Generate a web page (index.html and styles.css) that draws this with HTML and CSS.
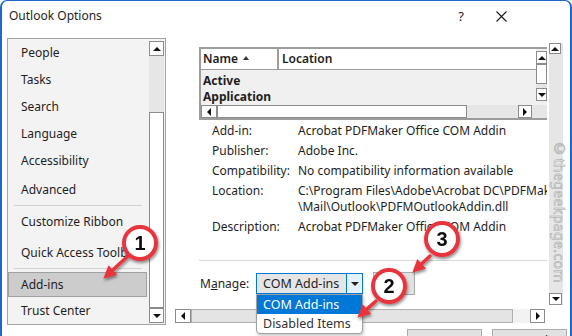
FILE: index.html
```html
<!DOCTYPE html>
<html lang="en">
<head>
    <meta charset="UTF-8">
    <title>Outlook Options</title>
    <link rel="stylesheet" href="styles.css">
</head>
<body>
    <div class="window">
        <header class="titlebar">
            <span class="title">Outlook Options</span>
            <span class="help">?</span>
            <svg class="close" width="11" height="11" viewBox="0 0 11 11">
                <path d="M0.5 0.5L10.5 10.5M10.5 0.5L0.5 10.5" stroke="#1a1a1a" stroke-width="1.1"/>
            </svg>
        </header>

        <div class="main">
            <nav class="nav">
                <ul class="nav-list">
                    <li class="nav-item">People</li>
                    <li class="nav-item">Tasks</li>
                    <li class="nav-item">Search</li>
                    <li class="nav-item">Language</li>
                    <li class="nav-item">Accessibility</li>
                    <li class="nav-item tall">Advanced</li>
                    <li class="nav-sep"></li>
                    <li class="nav-item tall">Customize Ribbon</li>
                    <li class="nav-item tall">Quick Access Toolbar</li>
                    <li class="nav-sep"></li>
                    <li class="nav-item selected">Add-ins</li>
                    <li class="nav-item">Trust Center</li>
                </ul>
                <div class="nav-scroll">
                    <span class="sb-btn up"></span>
                    <span class="sb-track"></span>
                    <span class="sb-thumb"></span>
                    <span class="sb-btn down"></span>
                </div>
            </nav>

            <section class="content">
                <div class="viewport">
                    <div class="addin-table">
                        <div class="lv-head">
                            <span class="lv-col name">Name <i class="sort"></i></span>
                            <span class="lv-col location">Location</span>
                        </div>
                        <div class="lv-group">Active Application</div>
                        <div class="lv-vscroll">
                            <span class="sb-btn up"></span>
                            <span class="sb-thumb"></span>
                            <span class="sb-track"></span>
                            <span class="sb-btn down"></span>
                        </div>
                        <div class="lv-hscroll">
                            <span class="sb-btn left"></span>
                            <span class="sb-thumb"></span>
                            <span class="sb-track"></span>
                            <span class="sb-btn right"></span>
                            <span class="sb-corner"></span>
                        </div>
                    </div>

                    <dl class="details">
                        <dt>Add-in:</dt>
                        <dd>Acrobat PDFMaker Office COM Addin</dd>
                        <dt>Publisher:</dt>
                        <dd>Adobe Inc.</dd>
                        <dt>Compatibility:</dt>
                        <dd>No compatibility information available</dd>
                        <dt>Location:</dt>
                        <dd>C:\Program Files\Adobe\Acrobat DC\PDFMaker<br>\Mail\Outlook\PDFMOutlookAddin.dll</dd>
                        <dt>Description:</dt>
                        <dd>Acrobat PDFMaker Office COM Addin</dd>
                    </dl>

                    <div class="divider"></div>

                    <div class="manage">
                        <label class="manage-label">M<u>a</u>nage:</label>
                        <div class="combo">
                            <span class="combo-value">COM Add-ins</span>
                            <span class="combo-btn"></span>
                            <ul class="combo-list">
                                <li class="active">COM Add-ins</li>
                                <li>Disabled Items</li>
                            </ul>
                        </div>
                        <button class="go">Go</button>
                    </div>
                </div>

                <div class="page-vscroll">
                    <span class="sb-btn up"></span>
                    <span class="sb-track"></span>
                    <span class="sb-btn down"></span>
                </div>

                <div class="page-hscroll">
                    <span class="sb-btn left"></span>
                    <span class="sb-thumb"></span>
                    <span class="sb-track"></span>
                    <span class="sb-btn right"></span>
                </div>
            </section>
        </div>

        <footer class="buttons">
            <button class="dlg-btn">OK</button>
            <button class="dlg-btn">Cancel</button>
        </footer>
    </div>

    <div class="watermark">©thegeekpage.com</div>

    <svg class="callouts" width="572" height="336" viewBox="0 0 572 336">
        <defs>
            <marker id="head" markerWidth="13" markerHeight="13" refX="2" refY="6.5" orient="auto" markerUnits="userSpaceOnUse">
                <path d="M0,0 L13,6.5 L0,13 z" fill="#e8343c"/>
            </marker>
            <filter id="shadow" x="-40%" y="-40%" width="180%" height="180%">
                <feDropShadow dx="1" dy="2" stdDeviation="1.5" flood-color="#000" flood-opacity="0.45"/>
            </filter>
        </defs>
        <g filter="url(#shadow)">
            <line class="arrow" x1="128" y1="256" x2="111.4" y2="271.3" marker-end="url(#head)"/>
            <circle class="badge" cx="140" cy="243" r="16"/>
            <text class="badge-num" x="140" y="250">1</text>

            <line class="arrow" x1="430" y1="256" x2="420.3" y2="265.1" marker-end="url(#head)"/>
            <circle class="badge" cx="442" cy="239" r="16"/>
            <text class="badge-num" x="442" y="246">3</text>

            <line class="arrow" x1="376" y1="301" x2="365.5" y2="310.4" marker-end="url(#head)"/>
            <circle class="badge" cx="389" cy="286" r="16"/>
            <text class="badge-num" x="389" y="293">2</text>
        </g>
    </svg>
</body>
</html>
```

FILE: styles.css
```css
* {
    margin: 0;
    padding: 0;
    box-sizing: border-box;
}

body {
    width: 572px;
    height: 336px;
    overflow: hidden;
    position: relative;
    background: #ffffff;
    font-family: 'Noto Sans', 'Open Sans', sans-serif;
    font-size: 12px;
    color: #1e1e1e;
}

ul {
    list-style: none;
}

button {
    font: inherit;
    color: inherit;
}

.window {
    height: 336px;
    border: 2px solid #1c68cc;
    border-top-width: 1px;
    border-bottom: none;
    border-radius: 7px 7px 0 0;
    overflow: hidden;
}

/* title bar */
.titlebar {
    height: 37px;
    display: flex;
    align-items: flex-start;
    padding: 7px 0 0 7px;
    line-height: 16px;
}

.title {
    font-size: 12px;
}

.help {
    margin-left: auto;
    width: 20px;
    text-align: center;
    font-size: 13px;
}

.close {
    margin: 3px 63px 0 25px;
}

/* layout */
.main {
    display: flex;
    height: 287px;
    padding-left: 5px;
}

/* left navigation */
.nav {
    width: 159px;
    height: 287px;
    display: flex;
    background: #f3f3f3;
    border: 1px solid #a3a3a3;
    overflow: hidden;
}

.nav-list {
    width: 140px;
    flex-shrink: 0;
}

.nav-item {
    height: 27px;
    line-height: 27px;
    padding-left: 13px;
    white-space: nowrap;
    overflow: hidden;
}

.nav-item.tall {
    height: 31px;
    line-height: 31px;
}

.nav-item.selected {
    height: 25px;
    line-height: 23px;
    margin: 3px 1px 0 0;
    padding-left: 12px;
    background: #cccccc;
    border: 1px solid #a0a0a0;
}

.nav-sep {
    height: 1px;
    margin: 0 6px;
    background: #d2d2d2;
}

.nav-scroll {
    width: 17px;
    display: flex;
    flex-direction: column;
    padding: 2px 1px 1px;
}

.nav-scroll .sb-btn {
    height: 15px;
    flex-shrink: 0;
}

.nav-scroll .sb-track {
    height: 56px;
    flex-shrink: 0;
}

.nav-scroll .sb-thumb {
    flex: 1;
}

/* scrollbar parts */
.sb-btn {
    display: flex;
    align-items: center;
    justify-content: center;
    background: #ffffff;
    border: 1px solid #8c8c8c;
}

.sb-btn::after {
    content: '';
    border-style: solid;
    border-color: transparent;
}

.sb-btn.up::after {
    border-width: 0 4px 4px;
    border-bottom-color: #111;
}

.sb-btn.down::after {
    border-width: 4px 4px 0;
    border-top-color: #111;
}

.sb-btn.left::after {
    border-width: 4px 4px 4px 0;
    border-right-color: #111;
}

.sb-btn.right::after {
    border-width: 4px 0 4px 4px;
    border-left-color: #111;
}

.sb-track {
    background: #e6e6e6;
}

.sb-thumb {
    background: #ffffff;
    border: 1px solid #8c8c8c;
}

/* right content */
.content {
    margin-left: 9px;
    width: 388px;
    padding-top: 5px;
    display: grid;
    grid-template-columns: 374px 14px;
    grid-template-rows: 266px 14px;
}

.viewport {
    position: relative;
    z-index: 2;
}

/* add-in list view */
.addin-table {
    width: 348px;
    height: 73px;
    margin: 4px 0 0 24px;
    border: 2px solid #9c9c9c;
    border-right: none;
    display: grid;
    grid-template-columns: 1fr 11px;
    grid-template-rows: 21px 35px 13px;
}

.lv-head {
    display: flex;
    border-bottom: 1px solid #9c9c9c;
    font-weight: 600;
    line-height: 20px;
}

.lv-col {
    padding-left: 2px;
    white-space: nowrap;
}

.lv-col.name {
    width: 78px;
    border-right: 2px solid #9c9c9c;
}

.lv-col.location {
    padding-left: 3px;
}

.sort {
    display: inline-block;
    vertical-align: middle;
    margin: -3px 0 0 2px;
    border-style: solid;
    border-color: transparent;
    border-width: 0 3.5px 4px;
    border-bottom-color: #333;
}

.lv-group {
    background: #f0f0f0;
    font-weight: 700;
    line-height: 16px;
    padding: 3px 255px 0 2px;
    width: 100%;
}

.lv-vscroll {
    grid-column: 2;
    grid-row: 1 / 3;
    display: flex;
    flex-direction: column;
    padding-top: 2px;
    background: #f0f0f0;
}

.lv-vscroll .sb-btn {
    height: 13px;
}

.lv-vscroll .sb-thumb {
    height: 20px;
}

.lv-vscroll .sb-track {
    height: 4px;
}

.lv-hscroll {
    grid-column: 1 / 3;
    grid-row: 3;
    display: flex;
}

.lv-hscroll .sb-btn {
    width: 16px;
}

.lv-hscroll .sb-btn.right {
    width: 14px;
}

.lv-hscroll .sb-thumb {
    width: 250px;
}

.lv-hscroll .sb-track {
    width: 51px;
}

.sb-corner {
    flex: 1;
    background: #e6e6e6;
}

/* details */
.details {
    display: grid;
    grid-template-columns: 86px max-content;
    row-gap: 4px;
    line-height: 16px;
    width: 335px;
    margin: 3px 0 0 37px;
    white-space: nowrap;
    overflow: hidden;
}

.divider {
    width: 348px;
    height: 1px;
    margin: 25px 0 0 24px;
    background: #d9d9d9;
}

/* manage row */
.manage {
    display: flex;
    align-items: center;
    margin-top: 11px;
    padding-left: 25px;
    height: 23px;
}

.manage-label {
    width: 56px;
}

.combo {
    position: relative;
    width: 107px;
    height: 21px;
    display: flex;
    border: 1px solid #0078d7;
    background: #e5e5e5;
}

.combo-value {
    flex: 1;
    padding-left: 6px;
    line-height: 19px;
    font-size: 12.5px;
}

.combo-btn {
    width: 16px;
    display: flex;
    align-items: center;
    justify-content: center;
    background: #e5f1fb;
    border-left: 1px solid #0078d7;
}

.combo-btn::after {
    content: '';
    border-style: solid;
    border-color: transparent;
    border-width: 4px 4px 0;
    border-top-color: #222;
}

.combo-list {
    position: absolute;
    top: 20px;
    left: -1px;
    width: 107px;
    background: #ffffff;
    border: 1px solid #a0a0a0;
    border-radius: 0 0 4px 4px;
    box-shadow: 1px 2px 3px rgba(0, 0, 0, 0.2);
    overflow: hidden;
    font-size: 12.5px;
}

.combo-list li {
    height: 19px;
    line-height: 19px;
    padding-left: 6px;
    color: #333;
}

.combo-list li.active {
    background: #0078d7;
    color: #ffffff;
}

.go {
    width: 42px;
    height: 23px;
    margin-left: 10px;
    background: #e1e1e1;
    border: 1px solid #adadad;
}

/* outer scrollbars */
.page-vscroll {
    grid-column: 2;
    grid-row: 1;
    height: 262px;
    display: flex;
    flex-direction: column;
    background: #e6e6e6;
}

.page-vscroll .sb-btn {
    height: 11px;
    width: 12px;
}

.page-vscroll .sb-btn.down {
    height: 12px;
    width: 13px;
}

.page-vscroll .sb-track {
    flex: 1;
}

.page-hscroll {
    grid-column: 1;
    grid-row: 2;
    width: 370px;
    display: flex;
}

.page-hscroll .sb-btn {
    width: 16px;
}

.page-hscroll .sb-btn.right {
    width: 15px;
}

.page-hscroll .sb-thumb {
    width: 322px;
    background: #e4e4e4;
    border-color: #b0b0b0;
}

.page-hscroll .sb-track {
    flex: 1;
    background: #f2f2f2;
}

/* dialog buttons */
.buttons {
    display: flex;
    justify-content: flex-end;
    gap: 10px;
    margin-top: 4px;
    padding-right: 3px;
}

.dlg-btn {
    width: 75px;
    height: 23px;
    background: #e1e1e1;
    border: 1px solid #adadad;
}

/* overlays */
.watermark {
    position: absolute;
    left: 550px;
    top: 139px;
    writing-mode: vertical-rl;
    font-size: 14px;
    letter-spacing: 0.4px;
    color: #ececec;
    -webkit-text-stroke: 0.5px #a4a4a4;
    z-index: 3;
}

.callouts {
    position: absolute;
    top: 0;
    left: 0;
    pointer-events: none;
    z-index: 4;
}

.arrow {
    stroke: #e8343c;
    stroke-width: 3.5;
    stroke-linecap: round;
}

.badge {
    fill: #ffffff;
    stroke: #e8343c;
    stroke-width: 4;
}

.badge-num {
    font-family: 'Liberation Sans', Arial, sans-serif;
    font-weight: 700;
    font-size: 20px;
    fill: #111;
    text-anchor: middle;
}
```
